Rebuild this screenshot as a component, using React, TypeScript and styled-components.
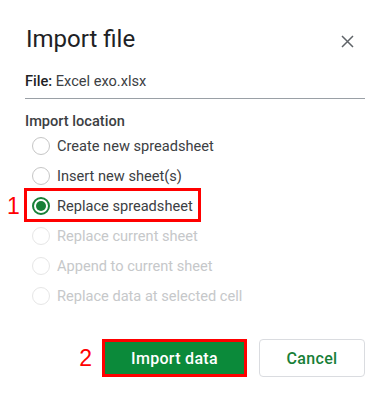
import React from "react";
import styled, { createGlobalStyle } from "styled-components";

const Global = createGlobalStyle`
  html, body { margin: 0; padding: 0; background: #ffffff; }
  body { font-family: Roboto, "Noto Sans", Arial, sans-serif; }
  * { box-sizing: border-box; }
`;

const Dialog = styled.div`
  width: 390px;
  height: 401px;
  padding: 23px 25px 0 25px;
  background: #fff;
  display: flex;
  flex-direction: column;
`;

const Header = styled.div`
  display: flex;
  align-items: center;
  justify-content: space-between;
  height: 32px;
`;

const Title = styled.h1`
  margin: 0;
  font-size: 24px;
  line-height: 32px;
  font-weight: 400;
  color: #202124;
  margin-left: 1px;
`;

const CloseButton = styled.button`
  border: none;
  background: none;
  padding: 0;
  width: 14px;
  height: 14px;
  margin-right: 11px;
  margin-top: 4px;
  display: flex;
  align-items: center;
  justify-content: center;
  cursor: pointer;
`;

const FileLine = styled.div`
  margin-top: 16px;
  font-size: 14.6px;
  line-height: 20px;
  color: #3c4043;
  padding-bottom: 7px;
  border-bottom: 1px solid #9aa0a6;
  & > b { font-weight: 500; color: #202124; }
`;

const SectionLabel = styled.div`
  margin-top: 12px;
  font-size: 14.6px;
  line-height: 20px;
  font-weight: 500;
  color: #3c4043;
`;

const Options = styled.div`
  display: flex;
  flex-direction: column;
  padding-left: 7px;
`;

const Row = styled.label<{ $highlight?: boolean; $disabled?: boolean }>`
  position: relative;
  display: flex;
  align-items: center;
  gap: 7px;
  height: 30px;
  width: fit-content;
  font-size: 14.6px;
  color: ${(p) => (p.$disabled ? "#c6c8ca" : "#3c4043")};
  ${(p) =>
    p.$highlight &&
    `
    &::after {
      content: "";
      position: absolute;
      left: -8px;
      right: -8px;
      top: -3px;
      bottom: -1px;
      border: 3px solid #ff0000;
    }
  `}
`;

const Circle = styled.span<{ $checked?: boolean; $disabled?: boolean }>`
  width: 18px;
  height: 18px;
  border-radius: 50%;
  border: ${(p) =>
    p.$checked ? "2px solid #188038" : p.$disabled ? "1.5px solid #e6e6e6" : "1.5px solid #c6c6c6"};
  display: flex;
  align-items: center;
  justify-content: center;
  flex: none;
  &::after {
    content: "";
    width: 10px;
    height: 10px;
    border-radius: 50%;
    background: ${(p) => (p.$checked ? "#188038" : "transparent")};
  }
`;

const Marker = styled.span<{ $left: number }>`
  position: absolute;
  left: ${(p) => p.$left}px;
  top: 50%;
  transform: translateY(-50%);
  font-family: "Liberation Sans", Arial, sans-serif;
  font-size: 23px;
  color: #ff0000;
`;

const Footer = styled.div`
  margin-top: 28px;
  display: flex;
  align-items: center;
  justify-content: flex-end;
  gap: 12px;
`;

const FooterMarker = styled.span`
  font-family: "Liberation Sans", Arial, sans-serif;
  font-size: 23px;
  color: #ff0000;
  margin-right: -2px;
`;

const Button = styled.button<{ $primary?: boolean }>`
  height: 38px;
  font-family: Roboto, Arial, sans-serif;
  font-size: 16px;
  font-weight: 500;
  letter-spacing: 0.3px;
  cursor: pointer;
  background: ${(p) => (p.$primary ? "#0b8a3a" : "#fff")};
  color: ${(p) => (p.$primary ? "#fff" : "#188038")};
  border: ${(p) => (p.$primary ? "3px solid #ff0000" : "1px solid #dadce0")};
  border-radius: ${(p) => (p.$primary ? "0" : "4px")};
  width: ${(p) => (p.$primary ? "145px" : "106px")};
  padding: 0;
`;

const options = [
  { label: "Create new spreadsheet" },
  { label: "Insert new sheet(s)" },
  { label: "Replace spreadsheet", checked: true, highlight: true },
  { label: "Replace current sheet", disabled: true },
  { label: "Append to current sheet", disabled: true },
  { label: "Replace data at selected cell", disabled: true },
];

export default function App() {
  return (
    <>
      <Global />
      <Dialog>
        <Header>
          <Title>Import file</Title>
          <CloseButton aria-label="Close">
            <svg width="13" height="13" viewBox="0 0 13 13">
              <path d="M1 1 L12 12 M12 1 L1 12" stroke="#5f6368" strokeWidth="1.5" fill="none" />
            </svg>
          </CloseButton>
        </Header>
        <FileLine>
          <b>File:</b> Excel exo.xlsx
        </FileLine>
        <SectionLabel>Import location</SectionLabel>
        <Options>
          {options.map((o) => (
            <Row key={o.label} $highlight={o.highlight} $disabled={o.disabled}>
              {o.highlight && <Marker $left={-25}>1</Marker>}
              <Circle $checked={o.checked} $disabled={o.disabled} />
              {o.label}
            </Row>
          ))}
        </Options>
        <Footer>
          <FooterMarker>2</FooterMarker>
          <Button $primary>Import data</Button>
          <Button>Cancel</Button>
        </Footer>
      </Dialog>
    </>
  );
}
